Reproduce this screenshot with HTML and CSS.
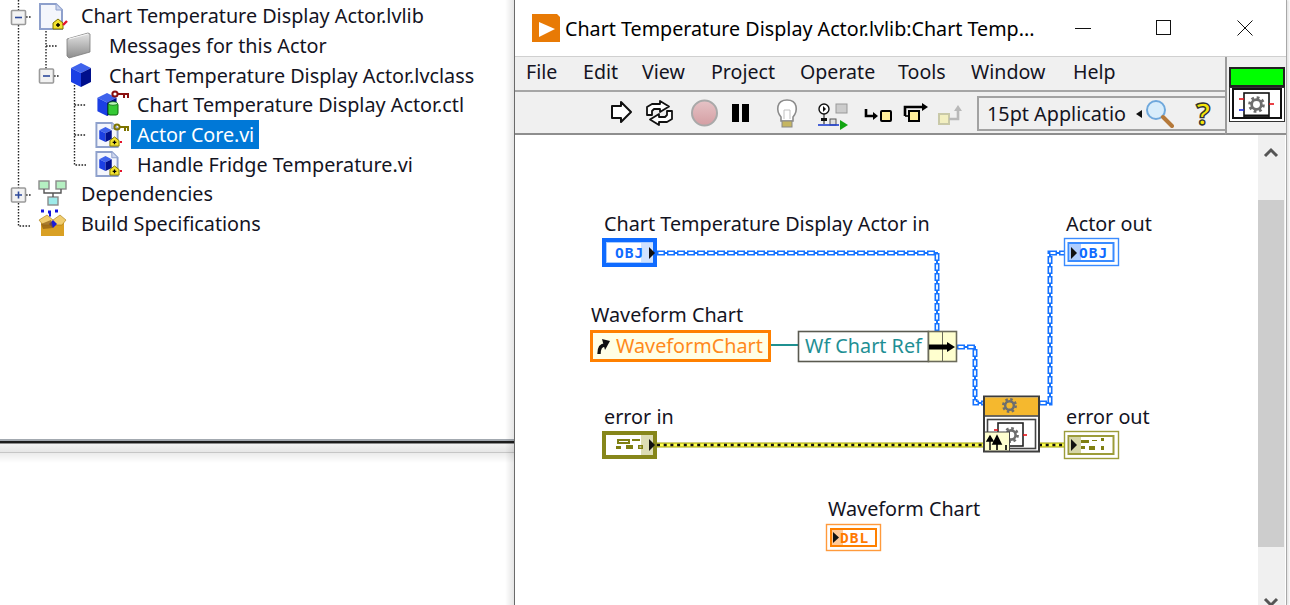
FILE: index.html
```html
<!DOCTYPE html>
<html lang="en">
<head>
<meta charset="utf-8">
<title>Chart Temperature Display Actor</title>
<link rel="stylesheet" href="styles.css">
</head>
<body>
<svg class="defs" width="0" height="0" aria-hidden="true">
  <defs>
    <linearGradient id="folderG" x1="0" y1="0" x2="0" y2="1"><stop offset="0" stop-color="#e4e4e4"/><stop offset="1" stop-color="#8c8c8c"/></linearGradient>
    <linearGradient id="abortG" x1="0" y1="0" x2="0" y2="1"><stop offset="0" stop-color="#e6c3c6"/><stop offset="1" stop-color="#d49ea3"/></linearGradient>
    <symbol id="cube" viewBox="0 0 22 24" overflow="visible">
      <path d="M11 0 21 5 11 10 1 5Z" fill="#3f63ec"/>
      <path d="M1 5 11 10V24L1 19Z" fill="#1b3fe4"/>
      <path d="M21 5 11 10V24L21 19Z" fill="#000f8c"/>
    </symbol>
    <symbol id="doc" viewBox="0 0 24 27" overflow="visible">
      <path d="M1 1H17L23 7V26H1Z" fill="#f4f6fc" stroke="#8ea0cc" stroke-width="2"/>
      <path d="M17 1V7H23" fill="#cdd6ee" stroke="#8ea0cc" stroke-width="1"/>
    </symbol>
    <symbol id="diamond" viewBox="0 0 12 12" overflow="visible">
      <path d="M1 5 6 1 11 5V11H1Z" fill="#f2e22e" stroke="#7d7400" stroke-width="1"/>
      <path d="M4 7H8M6 5V9" stroke="#000" stroke-width="1.4"/>
    </symbol>
    <symbol id="gear" viewBox="-9 -9 18 18" overflow="visible">
      <circle r="4.6" fill="none" stroke="#6e6e6e" stroke-width="2.6"/>
      <circle r="6.6" fill="none" stroke="#6e6e6e" stroke-width="2.6" stroke-dasharray="2.6 2.58"/>
    </symbol>
  </defs>
</svg>

<div class="screen">
  <section class="project">
    <svg class="connectors" width="100" height="240" viewBox="0 0 100 240" aria-hidden="true">
      <path class="dots" d="M18.5 0V10M18.5 25V188M18.5 203V226H30M26 17H31M46 31V69M46 46H58M54 76H60M74.5 85V165H86M74.5 105H86M74.5 135H86M26 195H31"/>
      <rect class="xbox" x="11.5" y="10.5" width="14" height="14" rx="1"/>
      <path class="xsign" d="M15 17.5H22"/>
      <rect class="xbox" x="39.5" y="69" width="14" height="14" rx="1"/>
      <path class="xsign" d="M43 76H50"/>
      <rect class="xbox" x="11.5" y="188" width="14" height="14" rx="1"/>
      <path class="xsign" d="M15 195H22M18.5 191.5V198.5"/>
    </svg>
    <ul class="tree">
      <li class="row lvl0">
        <svg class="ico" width="43" height="30" viewBox="0 0 43 30" aria-hidden="true">
          <use href="#doc" x="1" y="2" width="24" height="27"/>
          <use href="#diamond" x="14" y="17" width="12" height="12"/>
          <path d="M25 24 29 20" stroke="#e3132c" stroke-width="2.4"/>
        </svg>
        <span class="name">Chart Temperature Display Actor.lvlib</span>
      </li>
      <li class="row lvl1">
        <svg class="ico" width="43" height="30" viewBox="0 0 43 30" aria-hidden="true">
          <path d="M1 8 22 2 24 3V21L3 27 1 25Z" fill="url(#folderG)" stroke="#7c7c7c" stroke-width=".8"/>
          <path d="M3 8 22 3" stroke="#f5f5f5" stroke-width="1"/>
        </svg>
        <span class="name">Messages for this Actor</span>
      </li>
      <li class="row lvl1">
        <svg class="ico" width="43" height="30" viewBox="0 0 43 30" aria-hidden="true">
          <use href="#cube" x="4" y="3" width="22" height="24"/>
        </svg>
        <span class="name">Chart Temperature Display Actor.lvclass</span>
      </li>
      <li class="row lvl2">
        <svg class="ico" width="43" height="30" viewBox="0 0 43 30" aria-hidden="true">
          <use href="#cube" x="2" y="3" width="22" height="23"/>
          <rect x="14" y="13" width="10" height="12" rx="2" fill="#35c935" stroke="#0a6a0a"/>
          <ellipse cx="19" cy="13.5" rx="4.5" ry="1.8" fill="#b9f4b9" stroke="#0a6a0a" stroke-width=".8"/>
          <circle cx="21" cy="4" r="2.6" fill="none" stroke="#8a1010" stroke-width="2"/>
          <path d="M23 4H35M30 4V8M34 4V8" stroke="#8a1010" stroke-width="2" fill="none"/>
        </svg>
        <span class="name">Chart Temperature Display Actor.ctl</span>
      </li>
      <li class="row lvl2">
        <svg class="ico" width="43" height="30" viewBox="0 0 43 30" aria-hidden="true">
          <use href="#doc" x="1" y="2" width="24" height="26"/>
          <use href="#cube" x="4" y="7" width="15" height="15"/>
          <use href="#diamond" x="15" y="16" width="11" height="11"/>
          <path d="M26 22H28" stroke="#e3132c" stroke-width="2"/>
          <circle cx="23" cy="7" r="2.6" fill="none" stroke="#7d7400" stroke-width="2"/>
          <path d="M25 7H35M31 7V11M34 7V11" stroke="#7d7400" stroke-width="2" fill="none"/>
        </svg>
        <span class="name selected">Actor Core.vi</span>
      </li>
      <li class="row lvl2">
        <svg class="ico" width="43" height="30" viewBox="0 0 43 30" aria-hidden="true">
          <use href="#doc" x="1" y="2" width="24" height="26"/>
          <use href="#cube" x="4" y="7" width="15" height="15"/>
          <use href="#diamond" x="15" y="16" width="11" height="11"/>
          <path d="M26 22H28" stroke="#e3132c" stroke-width="2"/>
        </svg>
        <span class="name">Handle Fridge Temperature.vi</span>
      </li>
      <li class="row lvl0">
        <svg class="ico" width="43" height="30" viewBox="0 0 43 30" aria-hidden="true">
          <rect x="1" y="2" width="10" height="8" fill="#b5f0c2" stroke="#8b8b8b" stroke-width="1.4"/>
          <rect x="18" y="2" width="10" height="8" fill="#b5f0c2" stroke="#8b8b8b" stroke-width="1.4"/>
          <rect x="10" y="18" width="10" height="8" fill="#9eeaea" stroke="#8b8b8b" stroke-width="1.4"/>
          <path d="M6 10V14H23V10M15 14V18" fill="none" stroke="#555" stroke-width="1.4"/>
        </svg>
        <span class="name">Dependencies</span>
      </li>
      <li class="row lvl0">
        <svg class="ico" width="43" height="30" viewBox="0 0 43 30" aria-hidden="true">
          <path d="M3 11H26V27H3Z" fill="#d9a024"/>
          <path d="M1 11 9 6 15 11 22 6 28 11 24 16H5Z" fill="#f0cd6f" stroke="#a8790e" stroke-width=".6"/>
          <path d="M15 11 19 15 15 19 11 15Z" fill="#1b1bd8"/>
          <path d="M3 15 13 11 15 19 5 20Z" fill="#8a5a12" opacity=".7"/>
          <path d="M3 2H6M10 3H13M17 2H20M11 6H13" stroke="#1414e0" stroke-width="3"/>
        </svg>
        <span class="name">Build Specifications</span>
      </li>
    </ul>
    <div class="splitter"></div>
  </section>

  <section class="window">
    <header class="titlebar">
      <svg class="app-icon" width="28" height="28" viewBox="0 0 28 28" aria-hidden="true">
        <path d="M0 0H25L28 3V28H0Z" fill="#e87a05"/>
        <path d="M7 8 23 15 7 23Z" fill="#fff"/>
      </svg>
      <span class="title-text">Chart Temperature Display Actor.lvlib:Chart Temp...</span>
      <div class="caption">
        <svg width="16" height="16" viewBox="0 0 16 16" aria-hidden="true"><path d="M0 8.5H16" stroke="#111"/></svg>
        <svg width="16" height="16" viewBox="0 0 16 16" aria-hidden="true"><rect x=".5" y=".5" width="14" height="14" fill="none" stroke="#111"/></svg>
        <svg width="16" height="16" viewBox="0 0 16 16" aria-hidden="true"><path d="M.5.5 15.5 15.5M15.5.5 .5 15.5" stroke="#111"/></svg>
      </div>
    </header>

    <div class="bars">
      <div class="bars-main">
        <nav class="menubar">
          <span class="m-file">File</span><span class="m-edit">Edit</span><span class="m-view">View</span><span class="m-project">Project</span><span class="m-operate">Operate</span><span class="m-tools">Tools</span><span class="m-window">Window</span><span>Help</span>
        </nav>
        <div class="toolbar">
          <svg width="37" height="41" viewBox="0 0 37 41" aria-hidden="true"><path d="M4 14H13V10L23 20 13 30V26H4Z" fill="#fff" stroke="#111" stroke-width="2" stroke-linejoin="round"/></svg>
          <svg width="46" height="41" viewBox="0 0 46 41" aria-hidden="true">
            <path d="M2 23V15L7 12H15V9L24 14.5 15 20V17H9L7 19V23Z" fill="#fff" stroke="#111" stroke-width="1.8" stroke-linejoin="round"/>
            <path d="M27 19V27L22 30H14V33L5 27.5 14 22V25H20L22 23V19Z" fill="#fff" stroke="#111" stroke-width="1.8" stroke-linejoin="round"/>
          </svg>
          <svg width="36" height="41" viewBox="0 0 36 41" aria-hidden="true">
            <circle cx="13.5" cy="21" r="12.5" fill="url(#abortG)" stroke="#a9a9a9" stroke-width="2"/>
          </svg>
          <svg width="46" height="41" viewBox="0 0 46 41" aria-hidden="true"><rect x="5" y="12" width="7" height="18" fill="#000"/><rect x="15" y="12" width="7" height="18" fill="#000"/></svg>
          <svg width="45" height="41" viewBox="0 0 45 41" aria-hidden="true">
            <path d="M8 25C3 19 3 8 14 8S25 19 20 25V29H8Z" fill="#fff" stroke="#8b8b8b" stroke-width="1.6"/>
            <rect x="9" y="29" width="10" height="6" fill="#c5b560" stroke="#888"/>
            <path d="M11 27V18H17V27" fill="none" stroke="#c0c0c0"/>
          </svg>
          <svg width="46" height="41" viewBox="0 0 46 41" aria-hidden="true">
            <circle cx="6" cy="17" r="5" fill="#fff" stroke="#111" stroke-width="1.4"/>
            <path d="M5 14V20L8 17Z" fill="#111"/>
            <path d="M6 22V32" stroke="#111"/><rect x="18" y="12" width="11" height="9" fill="#ccc" stroke="#999"/>
            <rect x="12" y="27" width="6" height="6" fill="#ddd" stroke="#555"/>
            <rect x="3" y="26" width="6" height="3" fill="#111"/>
            <path d="M0 33H21" stroke="#1e3fd0" stroke-width="1.6"/><path d="M22 28 30 33 22 38Z" fill="#12a512"/>
          </svg>
          <svg width="37" height="41" viewBox="0 0 37 41" aria-hidden="true">
            <path d="M2 17V24H11" fill="none" stroke="#000" stroke-width="2.6"/><path d="M9 20 14 24 9 28Z" fill="#000"/>
            <rect x="17" y="19" width="10" height="10" rx="1" fill="#ffee9a" stroke="#000" stroke-width="2"/>
          </svg>
          <svg width="37" height="41" viewBox="0 0 37 41" aria-hidden="true">
            <rect x="8" y="19" width="10" height="10" fill="#ffee9a" stroke="#000" stroke-width="2"/>
            <path d="M4 24V15H22" fill="none" stroke="#000" stroke-width="2.6"/><path d="M21 11 27 15 21 19Z" fill="#000"/>
            <path d="M4 24H8" stroke="#000" stroke-width="1.6"/>
          </svg>
          <svg width="39" height="41" viewBox="0 0 39 41" aria-hidden="true">
            <rect x="1" y="22" width="10" height="10" fill="#f2efc0" stroke="#c9c9a8" stroke-width="2"/>
            <path d="M11 27H20V18" fill="none" stroke="#b9b9b9" stroke-width="2.6"/><path d="M16 19 20 13 24 19Z" fill="#b9b9b9"/>
          </svg>
          <div class="fontbox">
            <span class="font-name">15pt Applicatio</span>
            <svg class="font-caret" width="8" height="10" viewBox="0 0 8 10" aria-hidden="true"><path d="M0 5 6 1V9Z" fill="#111"/></svg>
            <svg class="font-glass" width="29" height="30" viewBox="0 0 29 30" aria-hidden="true">
              <circle cx="11" cy="11" r="9" fill="#d8edfb" stroke="#6fa8dc" stroke-width="2"/>
              <path d="M18 18 27 27" stroke="#b5793a" stroke-width="4" stroke-linecap="round"/>
            </svg>
            <span class="font-help">?</span>
          </div>
        </div>
      </div>
      <aside class="vi-col">
        <div class="vi-green"></div>
        <svg class="vi-icon" width="56" height="35" viewBox="0 0 56 35" aria-hidden="true">
          <rect x=".5" y=".5" width="55" height="34" fill="#fff" stroke="#333"/>
          <rect x="4" y="2" width="48" height="29" fill="#fff" stroke="#111" stroke-width="2"/>
          <rect x="15" y="6" width="25" height="24" fill="#fff" stroke="#111" stroke-width="1.6"/>
          <path d="M15 28.5H40" stroke="#111" stroke-width="2"/>
          <use href="#gear" x="18" y="8" width="19" height="19"/>
          <path d="M10 12H15" stroke="#e5121a" stroke-width="1.6"/><path d="M10 23H15" stroke="#1a2be5" stroke-width="1.6"/><path d="M40 17H45" stroke="#e5121a" stroke-width="1.6"/>
        </svg>
      </aside>
    </div>

    <div class="body">
      <svg class="diagram" width="743" height="470" viewBox="515 135 743 470">
        <!-- wires -->
        <path class="wire-teal" d="M771 345H798"/>
        <path class="wire-blue-core" d="M657 253H937V331M957 347H975V403H984M1039 403H1050V253H1064"/>
        <path class="wire-blue" d="M657 253H937V331M957 347H975V403H984M1039 403H1050V253H1064"/>
        <path class="wire-blue-in" d="M657 253H937V331M957 347H975V403H984M1039 403H1050V253H1064"/>
        <path class="wire-err" d="M657 445H984M1039 445H1064"/>
        <path class="wire-err-in" d="M657 445H984M1039 445H1064"/>
        <path class="wire-err-dot" d="M657 445H984M1039 445H1064"/>

        <!-- labels -->
        <text class="lbl" x="604" y="231">Chart Temperature Display Actor in</text>
        <text class="lbl" x="1066" y="231">Actor out</text>
        <text class="lbl" x="591" y="322">Waveform Chart</text>
        <text class="lbl" x="604" y="424">error in</text>
        <text class="lbl" x="1066" y="424">error out</text>
        <text class="lbl" x="828" y="516">Waveform Chart</text>

        <!-- OBJ control -->
        <rect x="604" y="240" width="51" height="25" fill="#fff" stroke="#0f6bff" stroke-width="4"/>
        <rect x="606.5" y="242.5" width="46" height="20" fill="none" stroke="#a9ccff"/>
        <rect x="641" y="243" width="12" height="19" fill="#cfe2ff"/>
        <text class="term-blue" x="615" y="258">OBJ</text>
        <path d="M649 247 655 253 649 259Z" fill="#111"/>

        <!-- OBJ indicator -->
        <rect x="1064.5" y="238.5" width="54" height="27" fill="#fff" stroke="#3a8bff" stroke-width="1.4"/>
        <rect x="1068.5" y="243" width="45" height="18" fill="#fff" stroke="#3a8bff" stroke-width="2"/>
        <rect x="1070" y="244" width="11" height="16" fill="#aecdff"/>
        <path d="M1071 247 1077 253 1071 259Z" fill="#111"/>
        <text class="term-blue" x="1079" y="258">OBJ</text>

        <!-- reference control -->
        <rect x="591.5" y="331.5" width="178" height="29" fill="#ffffe6" stroke="#ff8000" stroke-width="3"/>
        <path d="M599 354C599 348 601 345 605 345" fill="none" stroke="#111" stroke-width="3.4"/>
        <path d="M602 339 610 341 605 350Z" fill="#111"/>
        <text class="term-orange" x="616" y="353">WaveformChart</text>

        <!-- property node -->
        <rect x="798.5" y="331.5" width="130" height="30" fill="#fff" stroke="#5a5a50" stroke-width="1.6"/>
        <text class="term-teal" x="805" y="353">Wf Chart Ref</text>
        <rect x="928.5" y="331.5" width="28" height="30" fill="#ffffcf" stroke="#6b6b5a" stroke-width="1.6"/>
        <path d="M942.5 331V361" stroke="#6b6b5a"/>
        <path d="M929 347H948" stroke="#000" stroke-width="5"/>
        <path d="M947 342 955 347 947 352Z" fill="#000"/>

        <!-- error in -->
        <rect x="604" y="433" width="51" height="24" fill="#fff" stroke="#86861a" stroke-width="4"/>
        <rect x="641" y="435" width="12" height="20" fill="#dcdcb4"/>
        <path class="err-glyph" d="M617 439H630V444H617ZM619 441V442H628V441ZM632 439H640V441H632ZM616 446H621V449H616ZM626 445H633V449H626ZM638 445H643V449H638ZM639.5 446.5V447.5H641.5V446.5Z" fill-rule="evenodd"/>
        <path d="M649 439 655 445 649 451Z" fill="#111"/>

        <!-- error out -->
        <rect x="1064.5" y="431.5" width="54" height="27" fill="#fff" stroke="#9c9c3a" stroke-width="1.4"/>
        <rect x="1068.5" y="436" width="45" height="18" fill="#fff" stroke="#9c9c3a" stroke-width="2"/>
        <rect x="1070" y="437" width="11" height="16" fill="#d6d6a8"/>
        <path d="M1071 439 1077 445 1071 451Z" fill="#111"/>
        <path class="err-glyph" d="M1081 440H1089V443H1081ZM1092 440H1097V441H1092ZM1101 438H1104V441H1101ZM1081 446H1085V449H1081ZM1089 446H1095V450H1089ZM1101 446H1104V450H1101Z"/>

        <!-- call node -->
        <rect x="984" y="396.5" width="55" height="55" fill="#fff" stroke="#3c3c3c" stroke-width="2"/>
        <rect x="985" y="397.5" width="53" height="18" fill="#f5b82e"/>
        <path d="M984 416H1039" stroke="#3c3c3c" stroke-width="1.4"/>
        <use href="#gear" x="1001" y="397" width="17" height="17"/>
        <rect x="987.5" y="419.5" width="48" height="29" fill="#fff" stroke="#444" stroke-width="1.6"/>
        <rect x="998" y="423" width="25" height="23" fill="#fff" stroke="#222" stroke-width="1.6"/>
        <use href="#gear" x="1002" y="426" width="18" height="18"/>
        <path d="M994 430H998" stroke="#e5121a" stroke-width="1.6"/><path d="M1023 435H1027" stroke="#e5121a" stroke-width="1.6"/>
        <rect x="984.5" y="432" width="25" height="19" fill="#ffffcf" stroke="#444"/>
        <path d="M990 450V439M987 441 990 436 993 441Z" stroke="#000" stroke-width="1.4" fill="#000"/>
        <path d="M997 450V440M1006 450V445M993 444 997 436 1001 444Z" stroke="#000" stroke-width="1.6" fill="#000"/>

        <!-- DBL terminal -->
        <rect x="826.5" y="524.5" width="54" height="26" fill="#fff" stroke="#ff9a3c" stroke-width="1.4"/>
        <rect x="831" y="529" width="45" height="17" fill="#fff" stroke="#ff8000" stroke-width="2"/>
        <rect x="832" y="530" width="11" height="15" fill="#ffc998"/>
        <path d="M833 532 839 537.5 833 543Z" fill="#111"/>
        <text class="term-dbl" x="840" y="543">DBL</text>
      </svg>
      <div class="scrollbar">
        <svg width="26" height="34" viewBox="0 0 26 34" aria-hidden="true"><path d="M7 21 13 15 19 21" fill="none" stroke="#555" stroke-width="3"/></svg>
        <div class="thumb"></div>
        <svg class="chev-down" width="26" height="14" viewBox="0 0 26 14" aria-hidden="true"><path d="M7 2 13 8 19 2" fill="none" stroke="#555" stroke-width="3"/></svg>
      </div>
    </div>
  </section>
</div>
</body>
</html>
```
FILE: styles.css
```css
* { box-sizing: border-box; }
html, body { margin: 0; padding: 0; height: 100%; background: #fff; overflow: hidden; }
body { font-family: "Noto Sans", "Open Sans", sans-serif; font-size: 19.8px; color: #14141f; }
.defs { position: absolute; }

.screen { display: flex; width: 1290px; height: 605px; }

/* project tree pane */
.project { position: relative; width: 514px; flex: none; display: flex; flex-direction: column; }
.project::after {
  content: ""; position: absolute; right: 0; top: 0; bottom: 0; width: 9px;
  background: linear-gradient(to right, rgba(0,0,0,0), rgba(0,0,0,.1));
}
.connectors { position: absolute; left: 0; top: 0; }
.dots { fill: none; stroke: #222; stroke-width: 1.4; stroke-dasharray: 1.6 1.4; }
.xbox { fill: #f2f2f2; stroke: #9a9a9a; stroke-width: 1.6; }
.xsign { stroke: #2d4a9c; stroke-width: 1.6; fill: none; }

.tree { position: relative; list-style: none; margin: 0; padding: 1px 0 0; height: 439px; flex: none; }
.row { display: flex; align-items: center; height: 29.7px; white-space: nowrap; }
.lvl0 { padding-left: 38px; }
.lvl1 { padding-left: 66px; }
.lvl2 { padding-left: 94px; }
.ico { flex: none; overflow: visible; }
.selected { background: #0078d7; color: #fff; margin-left: -6px; padding: 0 5px 0 6px; line-height: 29px; height: 29px; letter-spacing: -.1px; }

.splitter {
  flex: none; height: 24px;
  background: linear-gradient(to bottom,
    #a3a9b0 0, #a3a9b0 2px, #1c1c1c 2px, #1c1c1c 4px, #8d8d8d 4px, #8d8d8d 5px,
    #f3f3f3 5px, #e6e6e6 13px, #c6c6c6 13px, #c6c6c6 14px, #ebebeb 14px, #fff 24px);
}

/* VI window */
.window { width: 773px; flex: none; display: flex; flex-direction: column; border-left: 1px solid #6a6a6a; border-right: 1px solid #a8a8a8; background: #fff; box-shadow: 2px 0 2px rgba(0,0,0,.1); }

.titlebar { height: 56px; flex: none; display: flex; align-items: center; padding-left: 17px; color: #000; }
.app-icon { flex: none; }
.title-text { margin-left: 5px; width: 470px; font-size: 19.7px; white-space: nowrap; overflow: hidden; }
.caption { margin-left: 40px; display: flex; gap: 65px; }

.bars { display: flex; height: 79px; flex: none; background: #f0f0f0; border-top: 1px solid #d0d0d0; }
.bars-main { flex: none; width: 710px; display: flex; flex-direction: column; }
.menubar { height: 35px; flex: none; display: flex; align-items: center; padding: 0 0 4px 11px; font-size: 19.6px; border-bottom: 2px solid #a6a6a6; }
.m-file { width: 57px; } .m-edit { width: 59px; } .m-view { width: 69px; } .m-project { width: 89px; }
.m-operate { width: 98px; } .m-tools { width: 73px; } .m-window { width: 102px; }

.toolbar { flex: 1; display: flex; padding-left: 93px; align-items: flex-start; border-bottom: 2px solid #8e8e8e; }
.toolbar > svg { flex: none; }
.fontbox { position: relative; flex: none; width: 248px; height: 35px; margin-top: 4px; display: flex; align-items: center; padding-left: 8px; border: 2px solid #a2a2a2; border-right-width: 0; }
.font-name { width: 149px; white-space: nowrap; overflow: hidden; }
.font-caret { flex: none; }
.font-glass { flex: none; margin-left: 1px; }
.font-help { margin-left: 22px; font-size: 30px; font-weight: 700; line-height: 30px; color: #f5e60a; -webkit-text-stroke: 1.4px #333; }

.vi-col { flex: 1; border-left: 2px solid #9c9c9c; padding: 10px 0 0 2px; border-bottom: 2px solid #8e8e8e; }
.vi-green { width: 56px; height: 20px; background: #00ff00; border: 2px solid #222; }
.vi-icon { display: block; }

.body { flex: 1; display: flex; min-height: 0; }
.diagram { flex: none; display: block; }
.lbl { font-family: "Noto Sans", "Open Sans", sans-serif; font-size: 19.8px; fill: #14141f; }
.term-blue { font-family: "DejaVu Sans Mono", monospace; font-size: 14.5px; font-weight: 700; fill: #0f6bff; letter-spacing: 1px; }
.term-dbl { font-family: "DejaVu Sans Mono", monospace; font-size: 14.5px; font-weight: 700; fill: #ff7a00; letter-spacing: 1px; }
.term-orange { font-family: "Noto Sans", sans-serif; font-size: 19.8px; fill: #ff8a1c; }
.term-teal { font-family: "Noto Sans", sans-serif; font-size: 19.8px; fill: #1f8f94; }

.wire-blue-core { fill: none; stroke: #1673ff; stroke-width: 2; }
.wire-blue { fill: none; stroke: #1673ff; stroke-width: 5; stroke-dasharray: 8 2; }
.wire-blue-in { fill: none; stroke: #fff; stroke-width: 1.8; stroke-dasharray: 5 5; stroke-dashoffset: -1.5; }
.wire-err { fill: none; stroke: #a3a300; stroke-width: 5; }
.wire-err-in { fill: none; stroke: #ffff55; stroke-width: 3; }
.wire-err-dot { fill: none; stroke: #111; stroke-width: 2.4; stroke-dasharray: 3 3.7; }
.wire-teal { fill: none; stroke: #1f9191; stroke-width: 2; }
.err-glyph { fill: #7f7f12; }

.scrollbar { flex: none; width: 27px; background: #f0f0f0; display: flex; flex-direction: column; padding-right: 1px; }
.scrollbar svg { flex: none; display: block; }
.thumb { height: 347px; margin-top: 31px; flex: none; background: #cdcdcd; }
.chev-down { margin-top: auto; margin-bottom: -6px; }
```
